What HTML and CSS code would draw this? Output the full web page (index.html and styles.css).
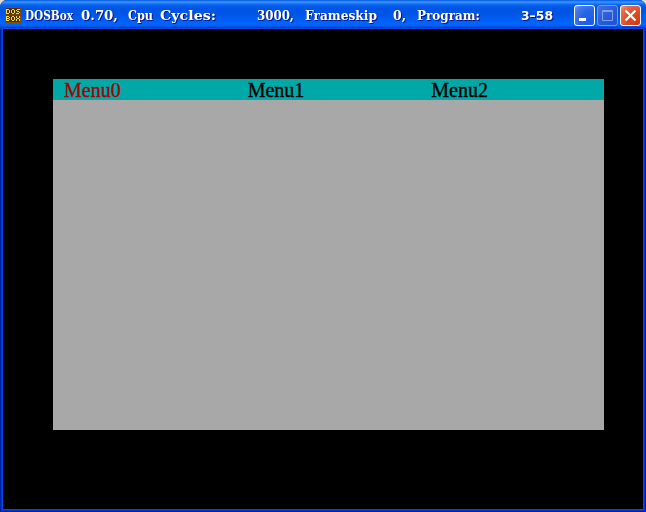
FILE: index.html
```
<!DOCTYPE html>
<html lang="en">
<head>
<meta charset="utf-8">
<title>DOSBox 0.70</title>
<link rel="stylesheet" href="styles.css">
</head>
<body>
<div class="window">
  <header class="titlebar">
    <svg class="app-icon" width="16" height="16" viewBox="0 0 16 16" aria-hidden="true">
      <rect width="16" height="16" fill="#523006"/>
      <path d="M0 .5h16M0 15.500h16M.5 0v16M15.500 0v16M1 8h14" stroke="#7a4c0c"/>
      <path d="M1.500 2v5M2 2.500h2M2 6.500h2M4.500 3v3M6.500 3v3M7 2.500h2M7 6.500h2M9.500 3v3M12 2.500h3M11.500 3v1M12 4.500h2M14.500 5v1M11 6.500h3M1.500 9v5M2 9.500h2M2 11.500h2M2 13.500h2M4.500 10v1M4.500 12v1M6.500 10v3M7 9.500h2M7 13.500h2M9.500 10v3M11.500 9v2M14.500 9v2M12 11.500h2M11.500 12v2M14.500 12v2" fill="none" stroke="#f4dc2c"/>
    </svg>
    <svg class="caption" width="536" height="24" viewBox="0 0 536 24">
      <text x="0" y="15" textLength="48" lengthAdjust="spacingAndGlyphs">DOSBox</text>
      <text x="56" y="15" textLength="37" lengthAdjust="spacingAndGlyphs">0.70,</text>
      <text x="103" y="15" textLength="25" lengthAdjust="spacingAndGlyphs">Cpu</text>
      <text x="135" y="15" textLength="56" lengthAdjust="spacingAndGlyphs">Cycles:</text>
      <text x="232" y="15" textLength="37" lengthAdjust="spacingAndGlyphs">3000,</text>
      <text x="280" y="15" textLength="72" lengthAdjust="spacingAndGlyphs">Frameskip</text>
      <text x="368" y="15" textLength="13" lengthAdjust="spacingAndGlyphs">0,</text>
      <text x="392" y="15" textLength="63" lengthAdjust="spacingAndGlyphs">Program:</text>
      <text class="sans" x="496" y="15" textLength="32" lengthAdjust="spacingAndGlyphs">3–58</text>
    </svg>
    <div class="controls">
      <span class="control"><svg width="19" height="19" viewBox="0 0 19 19"><rect x="4" y="12" width="7" height="3" fill="#fff"/></svg></span>
      <span class="control disabled"><svg width="19" height="19" viewBox="0 0 19 19"><path d="M4.500 4.500h10v10h-10zM4 5.500h11" fill="none" stroke="#7f9eef"/></svg></span>
      <span class="control close"><svg width="19" height="19" viewBox="0 0 19 19"><path d="M4.500 4.500l10 10M14.500 4.500l-10 10" stroke="#fff" stroke-width="2.200"/></svg></span>
    </div>
  </header>
  <main class="screen">
    <div class="desktop">
      <nav class="menubar">
        <span class="item selected">Menu0</span>
        <span class="item">Menu1</span>
        <span class="item">Menu2</span>
      </nav>
    </div>
  </main>
</div>
</body>
</html>
```
FILE: styles.css
```
* { box-sizing: border-box; }
body { margin: 0; background: #e4dfcb; }
.window {
  width: 646px;
  height: 512px;
  display: flex;
  flex-direction: column;
  border-radius: 7px 7px 0 0;
  overflow: hidden;
  background: #001ea0;
}
.titlebar {
  height: 29px;
  flex: none;
  display: flex;
  align-items: flex-start;
  padding: 5px 5px 0;
  background: linear-gradient(#0058e0 0, #3d95ff 2px, #2a80f8 3px, #0562ee 5px, #0055e5 8px, #0055e5 14px, #005cf5 19px, #0066ff 24px, #005cf0 26px, #0040c8 28px, #0036b4 29px);
}
.app-icon { margin-top: 2px; flex: none; }
.caption {
  margin-left: 4px;
  flex: none;
  overflow: visible;
  filter: drop-shadow(1px 1px 0 #0a1883);
}
.caption text {
  font: bold 12.5px "DejaVu Serif", serif;
  fill: #fff;
}
.caption .sans { font-family: "DejaVu Sans", sans-serif; }
.controls { display: flex; gap: 2px; margin-left: auto; }
.control {
  width: 21px;
  height: 21px;
  border: 1px solid #fff;
  border-radius: 3px;
  background: radial-gradient(circle at 90% 90%, #1b5ce9 0, #2763e6 50%, #4778e8 80%, #7399f2 100%);
}
.control svg { display: block; }
.disabled { border-color: #7597ec; background: linear-gradient(135deg, #4272e0, #2459d8 60%, #1d52d0); }
.close { background: radial-gradient(circle at 90% 90%, #d43b0c 0, #dd4e25 50%, #e76d4d 80%, #f09a80 100%); }
.screen {
  flex: 1;
  margin: 0 3px 3px;
  padding: 50px 39px 0 50px;
  background: #000;
  box-shadow: 0 0 0 1px #0a48e6, 0 0 0 2px #0831d9;
}
.desktop { height: 351px; background: #a8a8a8; }
.menubar {
  height: 21px;
  display: grid;
  grid-template-columns: repeat(3, 1fr);
  background: #00a8a8;
}
.item {
  padding-left: 11px;
  font: 20px/23px "Liberation Serif", serif;
  color: #000;
  -webkit-text-stroke: 0.35px currentColor;
}
.selected { color: #a80000; }
```
